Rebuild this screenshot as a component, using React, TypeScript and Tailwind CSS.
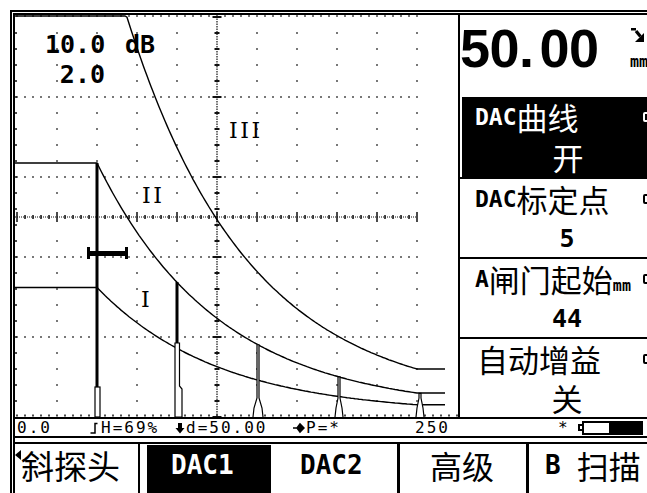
import React from "react";

const MONO = "font-['DejaVu_Sans_Mono',monospace] font-bold";
const CJK = "font-['Noto_Sans_CJK_SC',sans-serif]";

// DAC reference curve height above baseline (y=417)
const h = (x: number) => 248 * Math.exp(-0.0082 * (x - 97)) + 6;

function curve(k: number) {
  const pts: string[] = [];
  pts.push(`15,${Math.max(16, 417 - k * h(97)).toFixed(1)}`);
  for (let x = 97; x <= 417; x += 2) {
    pts.push(`${x},${Math.max(16, 417 - k * h(x)).toFixed(1)}`);
  }
  pts.push(`445,${(417 - k * h(417)).toFixed(1)}`);
  return pts.join(" ");
}

const Scope = () => {
  const els: React.ReactElement[] = [];
  // grid dots
  for (let i = 1; i <= 10; i++) {
    if (i === 5) continue;
    const x = 17 + 40 * i;
    for (let j = 1; j <= 24; j++) {
      if (j % 5 === 0 || j === 12 || j === 13) continue;
      els.push(<rect key={`d${i}-${j}`} x={x - 0.75} y={17 + 16 * j - 0.75} width={1.5} height={1.5} />);
    }
  }
  // dotted major lines
  [16, 97, 177, 257, 337].forEach((y) => {
    for (let x = 17; x <= 417; x += 8) {
      els.push(<rect key={`m${y}-${x}`} x={x - 0.75} y={y - 0.75} width={1.5} height={1.5} />);
    }
  });
  // left axis ticks
  for (let j = 1; j <= 24; j++) {
    els.push(<rect key={`l${j}`} x={15} y={17 + 16 * j - 0.75} width={2} height={1.5} />);
  }
  // horizontal scale
  for (let x = 17; x <= 417; x += 8) {
    const big = (x - 17) % 40 === 0;
    els.push(
      <rect key={`hs${x}`} x={x - 0.75} y={big ? 212 : 215} width={1.5} height={big ? 10 : 4} />
    );
  }
  // vertical scale ticks
  for (let j = 0; j <= 25; j++) {
    const big = j % 5 === 0;
    els.push(
      <rect key={`vs${j}`} x={big ? 212.5 : 214.5} y={17 + 16 * j - 1} width={big ? 9 : 5} height={2} />
    );
  }
  // baseline ticks
  for (let x = 17; x <= 457; x += 8) {
    els.push(<rect key={`b${x}`} x={x - 0.75} y={414.5} width={1.5} height={2} />);
  }

  const spike = (x: number, w: number) => {
    const p = 417 - h(x);
    return (
      <g key={`e${x}`}>
        <rect x={x - 1} y={p} width={2} height={Math.max(0, 405 - p)} />
        <polyline
          points={`${x - w},417 ${x - w + 1},408 ${x - 1},398 ${x - 1},${p} ${x + 1},${p} ${x + 1},398 ${x + w - 1},408 ${x + w},417`}
          fill="white"
          stroke="black"
          strokeWidth={1.2}
        />
      </g>
    );
  };

  return (
    <svg width={443} height={404} viewBox="15 15 443 404" className="block">
      <g fill="#111">{els}</g>
      <line x1={15} y1={217} x2={417} y2={217} stroke="#111" strokeWidth={1.2} strokeDasharray="1 1" />
      <line x1={217} y1={16} x2={217} y2={417} stroke="#111" strokeWidth={1.2} strokeDasharray="1.5 1" />
      <line x1={15} y1={418} x2={458} y2={418} stroke="black" strokeWidth={2} />

      {/* DAC curves */}
      <polyline points={curve(2)} fill="none" stroke="black" strokeWidth={1.4} />
      <polyline points={curve(1)} fill="none" stroke="black" strokeWidth={1.4} />
      <polyline points={curve(0.51)} fill="none" stroke="black" strokeWidth={1.4} />

      {/* echoes */}
      <rect x={95.5} y={163} width={3} height={224} fill="black" />
      <rect x={95} y={387} width={5} height={30} fill="white" stroke="black" strokeWidth={1.2} />
      <rect x={175.5} y={282} width={3} height={62} fill="black" />
      <polygon points="175,343 179.5,343 179.5,386 182,389 182,417 175,417" fill="white" stroke="black" strokeWidth={1.2} />
      {spike(258, 5)}
      {spike(339, 4)}
      {spike(420, 4)}

      {/* gate */}
      <rect x={87} y={251} width={41} height={5} fill="black" />
      <rect x={87} y={247} width={3} height={12} fill="black" />
      <rect x={125} y={247} width={3} height={12} fill="black" />

      <text x={229} y={138} fontFamily="DejaVu Serif" fontSize={22} letterSpacing={2.5} fill="black">III</text>
      <text x={142} y={203} fontFamily="DejaVu Serif" fontSize={22} letterSpacing={2.5} fill="black">II</text>
      <text x={141} y={307} fontFamily="DejaVu Serif" fontSize={22} fill="black">I</text>
    </svg>
  );
};

const Mark = ({ dark }: { dark?: boolean }) => (
  <div
    className={`shrink-0 w-[9px] h-[10px] rounded-[2px] border-2 ${dark ? "border-white" : "border-black"}`}
  />
);

const RightPanel = () => (
  <div className="w-[216px] shrink-0 border-l-2 border-b-2 border-black flex flex-col">
    <div className="h-[82px] flex">
      <div className="w-[170px] pt-[6px] font-['Liberation_Sans',sans-serif] font-bold text-[54px] leading-none tracking-[-0.5px]">
        50.<span className="ml-[6px]">00</span>
      </div>
      <div className="pt-[11px] flex flex-col">
        <svg width={16} height={17} viewBox="0 0 16 17">
          <rect x={1} y={2} width={5} height={2.5} fill="black" />
          <line x1={6} y1={5} x2={10.5} y2={10.5} stroke="black" strokeWidth={3.2} />
          <polygon points="14,16 14,7 5,16" fill="black" />
        </svg>
        <span className={`${MONO} text-[15px] leading-none mt-[12px]`}>mm</span>
      </div>
    </div>

    <div className="h-[80px] ml-[2px] bg-black text-white flex flex-col">
      <div className="h-[40px] flex items-center">
        <div className="w-[181px] flex items-center pl-[13px]">
          <span className={`${MONO} text-[23px] leading-none`}>DAC</span>
          <span className={`${CJK} text-[31px] leading-[40px]`}>曲线</span>
        </div>
        <Mark dark />
      </div>
      <div className={`h-[40px] text-center ${CJK} text-[31px] leading-[40px]`}>开</div>
    </div>

    <div className="h-[80px] border-t-2 border-black flex flex-col">
      <div className="h-[40px] flex items-center">
        <div className="w-[183px] flex items-center pl-[15px]">
          <span className={`${MONO} text-[23px] leading-none`}>DAC</span>
          <span className={`${CJK} text-[31px] leading-[40px]`}>标定点</span>
        </div>
        <Mark />
      </div>
      <div className={`h-[38px] flex items-center justify-center ${MONO} text-[25px] leading-none`}>5</div>
    </div>

    <div className="h-[80px] border-t-2 border-black flex flex-col">
      <div className="h-[40px] flex items-center">
        <div className="w-[183px] flex items-center pl-[15px]">
          <span className={`${MONO} text-[23px] leading-none`}>A</span>
          <span className={`${CJK} text-[31px] leading-[40px]`}>闸门起始</span>
          <span className={`${MONO} text-[15px] leading-none self-end mb-[5px]`}>mm</span>
        </div>
        <Mark />
      </div>
      <div className={`h-[38px] flex items-center justify-center ${MONO} text-[25px] leading-none`}>44</div>
    </div>

    <div className="h-[80px] border-t-2 border-black flex flex-col">
      <div className="h-[39px] flex items-center">
        <div className="w-[183px] flex items-center pl-[17px]">
          <span className={`${CJK} text-[31px] leading-[39px]`}>自动增益</span>
        </div>
        <Mark />
      </div>
      <div className={`h-[39px] text-center ${CJK} text-[31px] leading-[39px]`}>关</div>
    </div>
  </div>
);

const StatusBar = () => (
  <div className="h-[19px] border-b-2 border-black flex items-center pl-[2px] font-['DejaVu_Sans_Mono',monospace] text-[16px] tracking-[2px] leading-none">
    <span className="w-[73px] shrink-0">0.0</span>
    <span className="w-[85px] shrink-0 flex items-center">
      <svg width={10} height={12} viewBox="0 0 10 12" className="mr-[1px]">
        <path d="M0.5 11 H5 V1.5 H7.5" fill="none" stroke="black" strokeWidth={1.5} />
      </svg>
      H=69%
    </span>
    <span className="w-[118px] shrink-0 flex items-center">
      <svg width={10} height={12} viewBox="0 0 10 12" className="mr-[1px]">
        <path d="M3 1 H7 V6 H9.5 L5 11.5 L0.5 6 H3 Z" fill="black" />
      </svg>
      d=50.00
    </span>
    <span className="w-[122px] shrink-0 flex items-center">
      <svg width={12} height={12} viewBox="0 0 12 12" className="mr-[1px]">
        <path d="M0 6 H4 M4 6 L7 2 L11 6 L7 10 Z" fill="black" stroke="black" strokeWidth={1.5} />
      </svg>
      P=*
    </span>
    <span className="w-[143px] shrink-0">250</span>
    <span className="w-[20px] shrink-0">*</span>
    <div className="shrink-0 flex items-center">
      <div className="w-[4px] h-[7px] border-2 border-r-0 border-black" />
      <div className="w-[61px] h-[14px] border-2 border-black flex">
        <div className="w-[25px] h-full bg-white" />
        <div className="w-[32px] h-full bg-black" />
      </div>
    </div>
  </div>
);

const Buttons = () => (
  <div className="h-[51px] border-t-2 border-black flex">
    <div className="w-[125px] shrink-0 border-r-2 border-black flex items-start">
      <span className="mt-[6px] w-0 h-0 border-y-[5px] border-y-transparent border-r-[6px] border-r-black" />
      <span className={`${CJK} text-[33px] leading-[42px]`}>斜探头</span>
    </div>
    <div className="w-[7px] shrink-0" />
    <div className="w-[124px] shrink-0 mt-[1px] bg-black text-white pl-[24px]">
      <span className={`${MONO} text-[26px] leading-[40px]`}>DAC1</span>
    </div>
    <div className="w-[129px] shrink-0 border-r-[3px] border-black pl-[29px]">
      <span className={`${MONO} text-[26px] leading-[42px]`}>DAC2</span>
    </div>
    <div className="w-[129px] shrink-0 border-r-[3px] border-black pl-[30px]">
      <span className={`${CJK} text-[32px] leading-[42px]`}>高级</span>
    </div>
    <div className="flex-1 pl-[16px] flex items-start">
      <span className={`${MONO} text-[26px] leading-[42px]`}>B</span>
      <span className={`${CJK} text-[32px] leading-[42px] ml-[16px]`}>扫描</span>
    </div>
  </div>
);

export default function App() {
  return (
    <div className="w-[647px] h-[493px] overflow-hidden bg-white text-black">
      <div className="ml-[10px] mt-[10px] w-[664px] border-l-[5px] border-t-[5px] border-double border-black">
        <div className="flex h-[404px]">
          <div className="relative w-[443px] shrink-0">
            <Scope />
            <div className={`absolute left-[30px] top-[15px] ${MONO} text-[25px] leading-[30px]`}>
              <div className="flex">
                <span className="w-[60px] text-right">10.0</span>
                <span className="ml-[20px]">dB</span>
              </div>
              <div className="w-[60px] text-right">2.0</div>
            </div>
          </div>
          <RightPanel />
        </div>
        <StatusBar />
        <div className="h-[4px]" />
        <Buttons />
      </div>
    </div>
  );
}
